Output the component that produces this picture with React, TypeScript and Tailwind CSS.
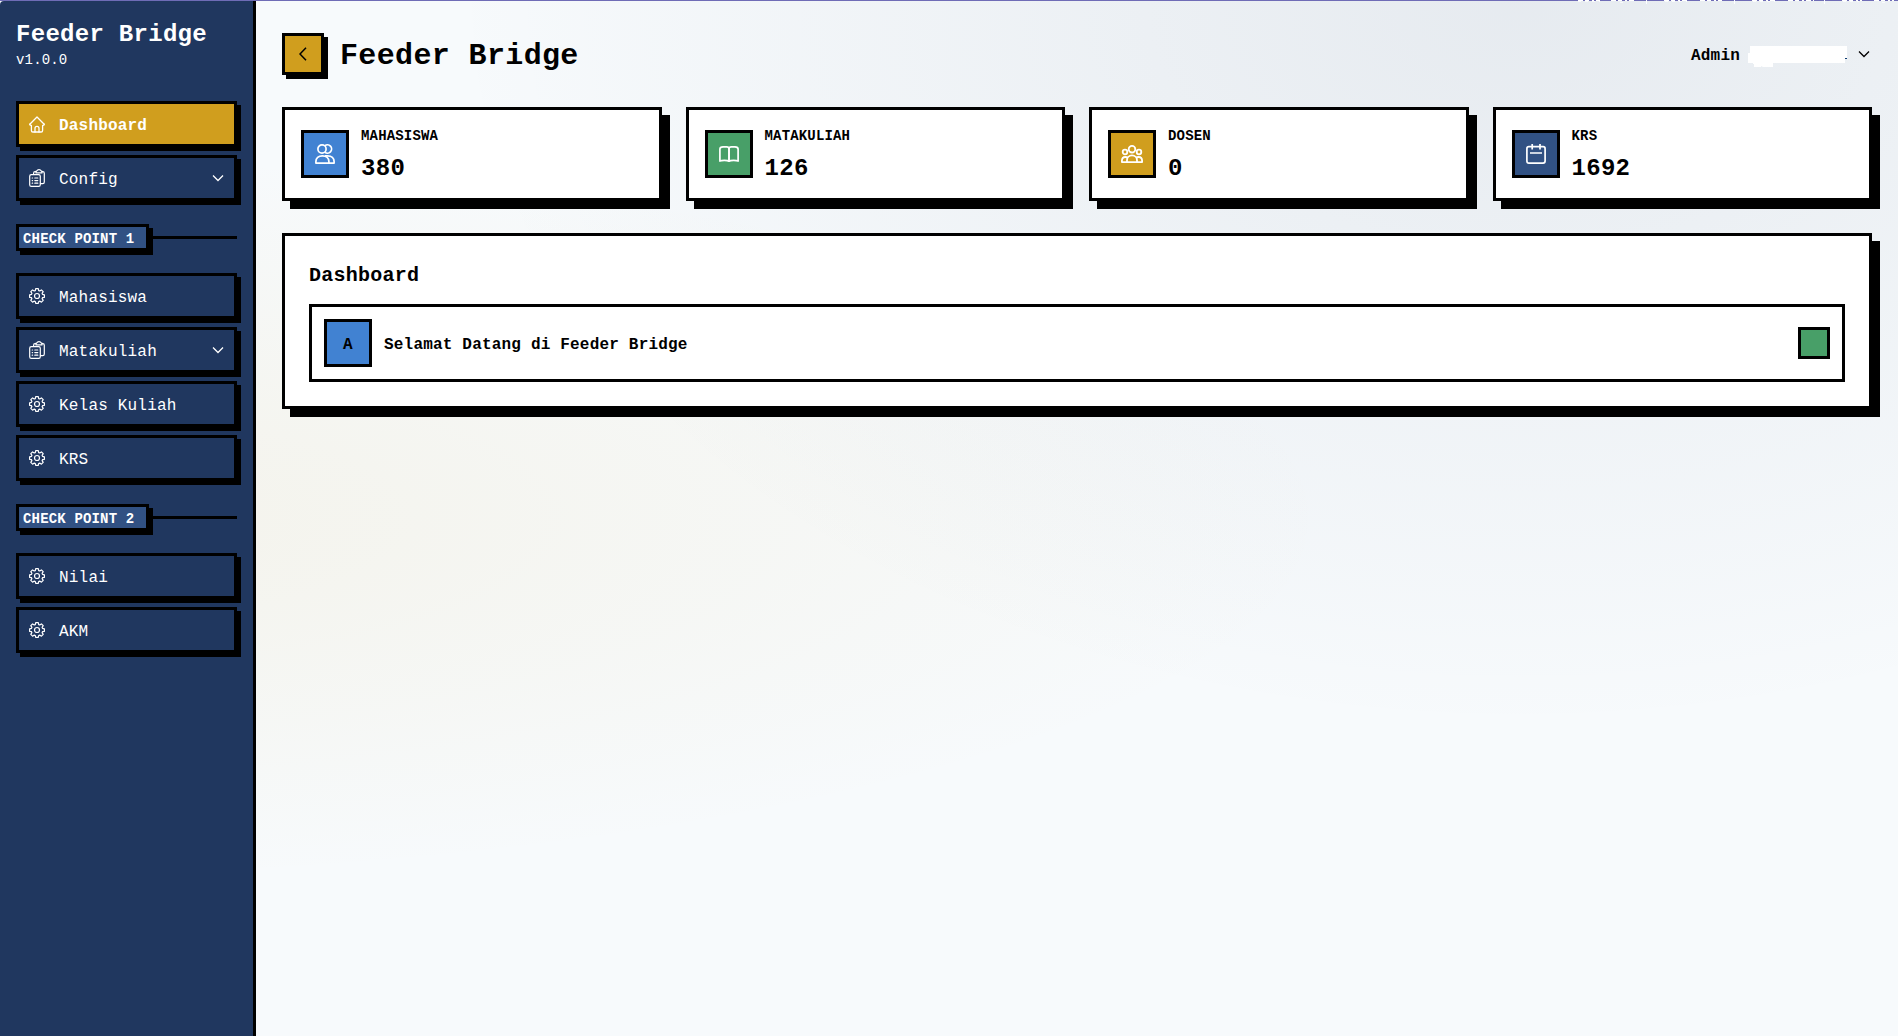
import React, { type ReactNode } from "react";

type IconProps = { className?: string };

function HomeIcon() {
  return (
    <svg viewBox="0 0 16 17" className="h-[17px] w-4 shrink-0" fill="none" stroke="currentColor" strokeWidth="1.3" strokeLinejoin="round" strokeLinecap="round">
      <path d="M.8 8.2 8 1l7.2 7.2" />
      <path d="M.8 8.2c0 .9.6 1.2 1.6 1.2v5c0 1 .5 1.6 1.5 1.6h8.2c1 0 1.5-.6 1.5-1.6v-5c1 0 1.6-.3 1.6-1.2" />
      <path d="M6 16v-3.6a2 2 0 0 1 4 0V16" />
    </svg>
  );
}

function ClipboardIcon() {
  return (
    <svg viewBox="0 0 16 18" className="h-[18px] w-4 shrink-0" fill="none" stroke="currentColor" strokeWidth="1.2" strokeLinejoin="round" strokeLinecap="round">
      <rect x=".7" y="5.6" width="10.6" height="11.8" rx="1.6" />
      <path d="M4.6 5.5V4.2c0-.9.5-1.5 1.4-1.5h1M13 2.7h.8c1 0 1.5.6 1.5 1.5v8.9c0 1-.6 1.6-1.5 1.6h-2.4" />
      <path d="M7 3.9V2.7c0-.5.3-.8.9-.8.3-.8 1-1.3 2.1-1.3s1.8.5 2.1 1.3c.6 0 .9.3.9.8v1.2Z" />
      <path d="M3.2 9h.4M3.2 11.6h.4M3.2 14.2h.4M5.8 9h3M5.8 11.6h3M5.8 14.2h3" />
    </svg>
  );
}

function GearIcon() {
  return (
    <svg viewBox="0 0 16 16" className="size-4 shrink-0" fill="none" stroke="currentColor" strokeWidth="1.2" strokeLinejoin="round">
      <path d="M6.7.7h2.6l.4 1.9 1 .4 1.7-1.1 1.8 1.8-1.1 1.7.4 1 1.9.4v2.5l-1.9.4-.4 1 1.1 1.7-1.8 1.8-1.7-1.1-1 .4-.4 1.9H6.7l-.4-1.9-1-.4-1.7 1.1-1.8-1.8 1.1-1.7-.4-1-1.9-.4V6.800l1.900-.4.4-1-1.100-1.700 1.800-1.800 1.700 1.100 1-.4Z" />
      <circle cx="8" cy="8" r="2.5" />
    </svg>
  );
}

function ChevronDown({ className = "" }: IconProps) {
  return (
    <svg viewBox="0 0 12 8" className={`h-2 w-3 shrink-0 ${className}`} fill="none" stroke="currentColor" strokeWidth="1.3">
      <path d="m1 1.5 5 5 5-5" />
    </svg>
  );
}

function PeopleIcon() {
  return (
    <svg viewBox="0 0 20 20" className="size-5" fill="none" stroke="currentColor" strokeWidth="1.7" strokeLinejoin="round">
      <circle cx="7" cy="5" r="4.1" />
      <path d="M9.8 1.900a4.100 4.100 0 1 1 0 6.200" />
      <path d="M.9 19.100v-1.600c0-3.300 2.500-5.700 6.500-5.700s6.500 2.400 6.500 5.700v1.600Z" />
      <path d="M10 11.800h2.600c4 0 6.500 2.400 6.500 5.700v1.600h-5.300" />
    </svg>
  );
}

function BookIcon() {
  return (
    <svg viewBox="0 0 20 16" className="h-4 w-5" fill="none" stroke="currentColor" strokeWidth="1.7" strokeLinejoin="round">
      <path d="M10 15.200V3c0-1.300-1-2.100-2.300-2.100H4C2 .9.900 1.800.9 3.300v11.800c1.200-.6 2.500-.7 4.400-.7 2.200 0 3.700.1 4.700.8Z" />
      <path d="M10 15.200V3c0-1.300 1-2.100 2.300-2.100H16c2 0 3.100.9 3.100 2.400v11.800c-1.200-.6-2.500-.7-4.400-.7-2.200 0-3.700.1-4.700.8Z" />
    </svg>
  );
}

function GroupIcon() {
  return (
    <svg viewBox="0 0 22 18" className="h-[18px] w-[22px]" fill="none" stroke="currentColor" strokeWidth="1.8" strokeLinejoin="round">
      <circle cx="11" cy="4.2" r="3.3" />
      <circle cx="4" cy="7" r="2.300" />
      <circle cx="18" cy="7" r="2.300" />
      <path d="M6 17.100v-1.800c0-2.700 2-4.900 5-4.900s5 2.200 5 4.900v1.800Z" />
      <path d="M6 17.100H.9v-1.300c0-2.200 1.400-3.800 3.500-3.800 1 0 1.700.2 2.300.7M16 17.100h5.100v-1.300c0-2.200-1.400-3.800-3.500-3.800-1 0-1.700.2-2.300.7" />
    </svg>
  );
}

function CalendarIcon() {
  return (
    <svg viewBox="0 0 20 20" className="size-5" fill="none" stroke="currentColor" strokeWidth="1.7" strokeLinejoin="round">
      <rect x=".9" y="2.700" width="18.200" height="16.400" rx="2" />
      <path d="M6.200 0v5.500M14 0v5.500M4 9h12" />
    </svg>
  );
}

function BackIcon() {
  return (
    <svg viewBox="0 0 8 14" className="h-3.5 w-2" fill="none" stroke="currentColor" strokeWidth="1.5">
      <path d="M7 .8 1 7l6 6.2" />
    </svg>
  );
}

type NavItemProps = { icon: ReactNode; label: string; active?: boolean; expandable?: boolean };

function NavItem({ icon, label, active = false, expandable = false }: NavItemProps) {
  return (
    <a className={`flex h-[46px] items-center border-3 border-black pr-[11px] pl-2.5 text-white shadow-[4px_4px_0_#000] ${active ? "bg-[#d09e1e] font-bold" : "bg-[#20375f]"}`}>
      {icon}
      <span className="ml-3.5 flex-1 pt-[3px] leading-6">{label}</span>
      {expandable && <ChevronDown className="-mr-px" />}
    </a>
  );
}

function SectionLabel({ children }: { children: ReactNode }) {
  return (
    <div className="mt-[23px] mb-[22px] flex items-center">
      <span className="h-[27px] w-[133px] border-3 border-black bg-[#315183] pl-1 text-sm leading-6 font-bold whitespace-nowrap text-white shadow-[4px_4px_0_#000]">{children}</span>
      <span className="h-[3px] flex-1 bg-black" />
    </div>
  );
}

type StatProps = { icon: ReactNode; color: string; label: string; value: string };

function StatCard({ icon, color, label, value }: StatProps) {
  return (
    <div className="flex h-[94px] items-center gap-3 border-3 border-black bg-white px-4 shadow-[8px_8px_0_#000]">
      <div className={`flex size-12 items-center justify-center border-3 border-black text-white ${color}`}>{icon}</div>
      <div className="pt-[3px] font-bold">
        <div className="text-sm leading-5">{label}</div>
        <div className="mt-[7px] text-2xl leading-8">{value}</div>
      </div>
    </div>
  );
}

const stats: StatProps[] = [
  { icon: <PeopleIcon />, color: "bg-[#4182d2]", label: "MAHASISWA", value: "380" },
  { icon: <BookIcon />, color: "bg-[#489f68]", label: "MATAKULIAH", value: "126" },
  { icon: <GroupIcon />, color: "bg-[#d09e1e]", label: "DOSEN", value: "0" },
  { icon: <CalendarIcon />, color: "bg-[#315183]", label: "KRS", value: "1692" },
];

export default function App() {
  return (
    <div className="relative flex h-[1036px] w-full overflow-hidden bg-[#f7fafc] bg-[radial-gradient(at_80%_0%,rgba(32,55,95,0.08)_0px,transparent_50%),radial-gradient(at_0%_50%,rgba(208,158,30,0.08)_0px,transparent_50%)] pt-px font-['Liberation_Mono',monospace] text-base text-black [&_*]:tracking-[0.012em]">
      <div className="absolute inset-x-0 top-0 h-px bg-[#6f6cb6]" />
      <svg className="absolute top-0 right-0 h-[4px] w-[338px]" viewBox="0 0 338 4" fill="none" stroke="#fff">
        <path d="M86.5 0v4M174.5 0v4M264.5 0v4" />
        <path strokeDasharray="5 2 4 3 2 2" d="M18 .5h22M51 .5h24M104 .5h24M140 .5h22M192 .5h24M228 .5h26M282 .5h20M314 .5h20" />
        <path opacity=".7" strokeDasharray="3 4" d="M18 1.5h22M105 1.5h22M193 1.5h22M283 1.5h16M60 2.5h4M322 2.5h4" />
      </svg>

      <aside className="w-64 shrink-0 rounded-tl-sm border-r-3 border-black bg-[#20375f] pr-4 pl-4">
        <h1 className="mt-[18px] text-2xl leading-8 font-bold text-white">Feeder Bridge</h1>
        <p className="-mt-px text-sm leading-5 text-white">v1.0.0</p>
        <nav className="mt-[31px]">
          <div className="flex flex-col gap-2">
            <NavItem icon={<HomeIcon />} label="Dashboard" active />
            <NavItem icon={<ClipboardIcon />} label="Config" expandable />
          </div>
          <SectionLabel>CHECK POINT 1</SectionLabel>
          <div className="flex flex-col gap-2">
            <NavItem icon={<GearIcon />} label="Mahasiswa" />
            <NavItem icon={<ClipboardIcon />} label="Matakuliah" expandable />
            <NavItem icon={<GearIcon />} label="Kelas Kuliah" />
            <NavItem icon={<GearIcon />} label="KRS" />
          </div>
          <SectionLabel>CHECK POINT 2</SectionLabel>
          <div className="flex flex-col gap-2">
            <NavItem icon={<GearIcon />} label="Nilai" />
            <NavItem icon={<GearIcon />} label="AKM" />
          </div>
        </nav>
      </aside>

      <main className="flex-1 pt-8 pr-[26px] pl-[26px]">
        <header className="flex h-[42px] items-center">
          <button className="flex size-[42px] items-center justify-center border-3 border-black bg-[#d09e1e] shadow-[4px_4px_0_#000]">
            <BackIcon />
          </button>
          <h2 className="ml-4 pt-1 text-3xl leading-9 font-bold">Feeder Bridge</h2>
          <div className="mr-[2px] ml-auto flex items-center font-bold">
            <span className="pt-[3px]">Admin</span>
            <span className="mt-1.5 ml-2 flex items-end">
              <svg viewBox="0 0 100 22" className="h-[22px] w-[100px]">
                <path fill="#fff" d="M2 0h97v12h-2v5H25v4H15l-2-1v1H6v-3H5v-1H0V7h2Z" />
                <path fill="#0b3a70" d="M97 12h2v1h-2Z" />
              </svg>
            </span>
            <ChevronDown className="ml-2.5" />
          </div>
        </header>

        <section className="mt-8 grid grid-cols-4 gap-6">
          {stats.map((s) => (
            <StatCard key={s.label} {...s} />
          ))}
        </section>

        <section className="mt-8 h-44 border-3 border-black bg-white px-6 shadow-[8px_8px_0_#000]">
          <h3 className="pt-[26px] text-xl leading-7 font-bold">Dashboard</h3>
          <div className="mt-3.5 flex h-[78px] items-center border-3 border-black px-3">
            <div className="flex size-12 items-center justify-center border-3 border-black bg-[#4182d2] pt-[3px] font-bold">A</div>
            <p className="ml-3 pt-[3px] font-bold">Selamat Datang di Feeder Bridge</p>
            <div className="ml-auto size-8 border-3 border-black bg-[#489f68]" />
          </div>
        </section>
      </main>
    </div>
  );
}
